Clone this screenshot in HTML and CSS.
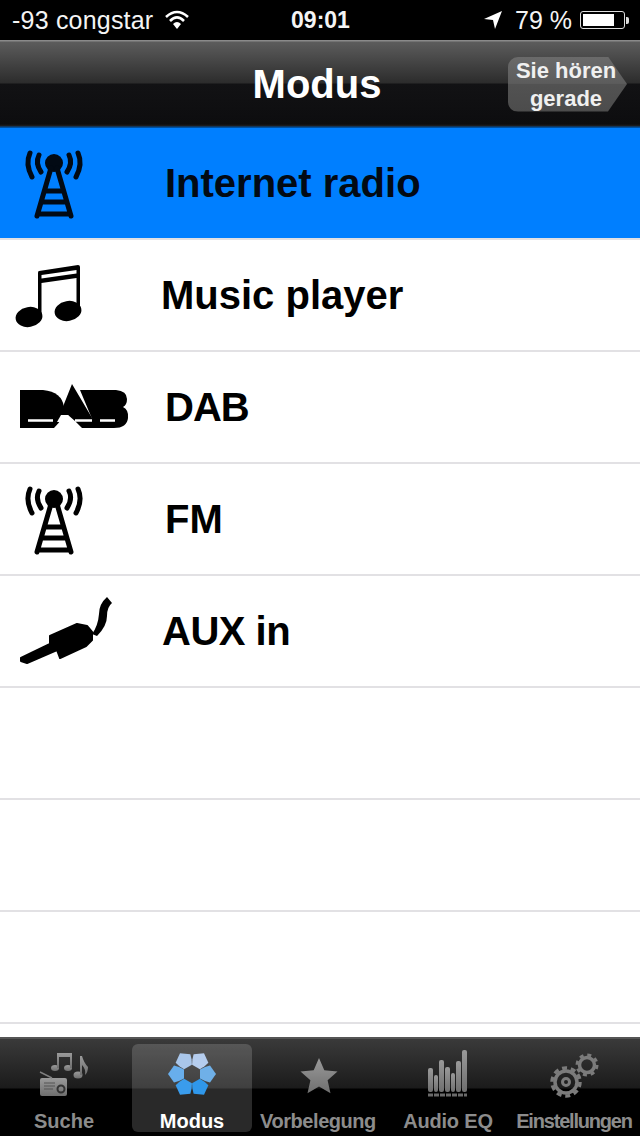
FILE: index.html
```html
<!DOCTYPE html>
<html lang="en">
<head>
    <meta charset="UTF-8">
    <meta name="viewport" content="width=device-width, initial-scale=1.0">
    <title>Modus</title>
    <link rel="stylesheet" href="styles.css">
</head>
<body>

<svg class="defs">
    <defs>
        <g id="tower">
            <circle cx="54" cy="35" r="9"/>
            <path d="M51 40 L37 88 M57 40 L71 88 M46 63 H62 M43 74 H65 M39 86 H69" fill="none" stroke="currentColor" stroke-width="5" stroke-linecap="round"/>
            <path d="M39 27 Q35 35 41 44 M69 27 Q73 35 67 44 M30 25 Q25 36 32 49 M78 25 Q83 36 76 49" fill="none" stroke="currentColor" stroke-width="5" stroke-linecap="round"/>
        </g>
        <linearGradient id="greyIcon" x1="0" y1="0" x2="0" y2="1">
            <stop offset="0" stop-color="#9a9a9a"/>
            <stop offset="1" stop-color="#6f6f6f"/>
        </linearGradient>
    </defs>
</svg>

<div class="status-bar">
    <div class="status-left">
        <span class="carrier">-93 congstar</span>
        <svg class="wifi" viewBox="0 0 24 20" width="24" height="20">
            <path d="M1 7 Q12 -3 23 7 M5 11 Q12 4 19 11" fill="none" stroke="#fff" stroke-width="2.6"/>
            <path d="M8 14 Q12 10 16 14 L12 19 Z" fill="#fff"/>
        </svg>
    </div>
    <div class="status-time">09:01</div>
    <div class="status-right">
        <svg class="arrow" viewBox="0 0 18 18" width="18" height="18">
            <path d="M0 8 L18 0 L11 18 L9 9 Z" fill="#fff"/>
        </svg>
        <span class="percent">79 %</span>
        <div class="battery"><div class="battery-fill"></div></div>
        <div class="battery-tip"></div>
    </div>
</div>

<div class="nav-bar">
    <div class="nav-title">Modus</div>
    <button class="now-playing">Sie hören<br>gerade</button>
</div>

<div class="list">
    <div class="row row-active">
        <svg class="row-icon" viewBox="0 0 165 110"><use href="#tower"/></svg>
        <span class="row-label">Internet radio</span>
    </div>
    <div class="row">
        <svg class="row-icon" viewBox="0 0 165 110">
            <ellipse cx="29" cy="77" rx="13.5" ry="10" transform="rotate(-10 29 77)"/>
            <ellipse cx="68" cy="71" rx="13.5" ry="10" transform="rotate(-10 68 71)"/>
            <path d="M39 31 L78 25 Q80 25 80 27 L80 71 L76.5 71 L76.5 38 L41.5 43 L41.5 77 L38 77 L38 33 Q38 31 39 31 Z"/>
            <path d="M41.5 35 L76.5 30 L76.5 33.5 L41.5 38.5 Z" fill="#fff"/>
        </svg>
        <span class="row-label label-music">Music player</span>
    </div>
    <div class="row">
        <svg class="row-icon" viewBox="0 0 165 110">
            <path d="M20 38 H43 Q62 40 64 55 Q64 67 54 76 H20 Z"/>
            <path d="M72 32 L98 76 H82 L75 69 L68 63 L60 63 L57 69 L52 76 Q62 66 60 62 Z"/>
            <path d="M80 38 H116 Q127 39 127 47 Q127 53 123 55 Q129 58 128 66 Q127 76 114 76 H96 L90 62 Z"/>
            <path d="M28 68.5 H53 M75 68.5 H92 M100 68.5 H115" stroke="#fff" stroke-width="2.4"/>
            <path d="M57 70 H72 L68 63 H61 Z" fill="#fff"/>
        </svg>
        <span class="row-label label-dab">DAB</span>
    </div>
    <div class="row">
        <svg class="row-icon" viewBox="0 0 165 110"><use href="#tower"/></svg>
        <span class="row-label">FM</span>
    </div>
    <div class="row">
        <svg class="row-icon" viewBox="0 0 165 110">
            <path d="M21 82 L50 68 L50 60 L77 48 L87 50 L92 56 L92 64 L86 70 L60 82 L57 74 L27 87 L21 85 Z" stroke="currentColor" stroke-width="2" stroke-linejoin="round"/>
            <path d="M92 58 Q98 50 99 38 Q99 28 107 21 L112 27 Q107 31 107 40 Q107 50 97 60 Z"/>
        </svg>
        <span class="row-label label-aux">AUX in</span>
    </div>
    <div class="row"></div>
    <div class="row"></div>
    <div class="row"></div>
    <div class="row"></div>
</div>

<div class="tab-bar">
    <div class="tab">
        <svg class="tab-icon" viewBox="0 0 80 56">
            <g fill="url(#greyIcon)">
                <path d="M18 34 L41 34 Q43 34 43 36 L43 50 Q43 52 41 52 L18 52 Q16 52 16 50 L16 36 Q16 34 18 34 Z"/>
                <ellipse cx="31" cy="24" rx="4" ry="3"/>
                <ellipse cx="44" cy="24" rx="4" ry="3"/>
                <path d="M33 9 L48 9 V24 H46 V13 L35 13 V24 H33 Z"/>
                <ellipse cx="54" cy="31" rx="4.5" ry="3.5"/>
                <path d="M56 12 L58 12 Q60 19 64 23 Q64 28 61 31 Q62 25 58 21 V31 H56 Z"/>
            </g>
            <path d="M16 28 L28 34" stroke="#7f7f7f" stroke-width="1.5"/>
            <path d="M20 39 H31 M20 42 H31 M20 45 H29" stroke="#555" stroke-width="1.2"/>
            <circle cx="37" cy="45" r="3.5" fill="none" stroke="#333" stroke-width="2"/>
        </svg>
        <span class="tab-label">Suche</span>
    </div>
    <div class="tab tab-active">
        <svg class="tab-icon" viewBox="0 0 80 56">
            <g transform="translate(40 30)">
                <polygon points="8,-4.5 8,4.5 13,7 18,8.5 24,0 18,-8.5 13,-7" fill="#6fb0e8"/>
                <polygon points="8,-4.5 8,4.5 13,7 18,8.5 24,0 18,-8.5 13,-7" fill="#2f97ea" transform="rotate(60)"/>
                <polygon points="8,-4.5 8,4.5 13,7 18,8.5 24,0 18,-8.5 13,-7" fill="#3a9cec" transform="rotate(120)"/>
                <polygon points="8,-4.5 8,4.5 13,7 18,8.5 24,0 18,-8.5 13,-7" fill="#68aeec" transform="rotate(180)"/>
                <polygon points="8,-4.5 8,4.5 13,7 18,8.5 24,0 18,-8.5 13,-7" fill="#a9c6ea" transform="rotate(240)"/>
                <polygon points="8,-4.5 8,4.5 13,7 18,8.5 24,0 18,-8.5 13,-7" fill="#b5cdee" transform="rotate(300)"/>
            </g>
        </svg>
        <span class="tab-label">Modus</span>
    </div>
    <div class="tab">
        <svg class="tab-icon" viewBox="0 0 80 56">
            <polygon points="41,14 46.3,26.2 59.5,27.5 49.6,36.3 52.5,49.3 41,42.5 29.5,49.3 32.4,36.3 22.5,27.5 35.7,26.2" fill="url(#greyIcon)"/>
        </svg>
        <span class="tab-label label-tight">Vorbelegung</span>
    </div>
    <div class="tab">
        <svg class="tab-icon" viewBox="0 0 80 56">
            <g fill="url(#greyIcon)">
                <rect x="20" y="24" width="5" height="24" rx="2"/>
                <rect x="26" y="31" width="4" height="17" rx="2"/>
                <rect x="31" y="16" width="5" height="32" rx="2"/>
                <rect x="37" y="23" width="5" height="25" rx="2"/>
                <rect x="43" y="29" width="4" height="19" rx="2"/>
                <rect x="48" y="17" width="5" height="31" rx="2"/>
                <rect x="54" y="6" width="5" height="42" rx="2"/>
            </g>
            <path d="M20 51 H59" stroke="#6a6a6a" stroke-width="3" stroke-dasharray="5 1"/>
        </svg>
        <span class="tab-label label-snug">Audio EQ</span>
    </div>
    <div class="tab">
        <svg class="tab-icon" viewBox="0 0 80 56" fill="none" stroke="#7b7b7b">
            <circle cx="32" cy="38" r="11" stroke-width="3.5"/>
            <circle cx="32" cy="38" r="14" stroke-width="3.5" stroke-dasharray="5 3.8"/>
            <circle cx="32" cy="38" r="3.5" stroke-width="3"/>
            <circle cx="53" cy="21" r="7.5" stroke-width="3.5"/>
            <circle cx="53" cy="21" r="10" stroke-width="3" stroke-dasharray="4 3.85"/>
        </svg>
        <span class="tab-label label-squeezed">Einstellungen</span>
    </div>
</div>

</body>
</html>
```

FILE: styles.css
```css
body {
    font-family: "Liberation Sans", Arial, sans-serif;
    display: flex;
    flex-direction: column;
    width: 640px;
    height: 1136px;
    margin: 0;
    overflow: hidden;
    background-color: white;
}

.defs {
    width: 0;
    height: 0;
    flex-shrink: 0;
}

/* status bar */
.status-bar {
    display: grid;
    grid-template-columns: 1fr auto 1fr;
    align-items: center;
    height: 40px;
    padding: 0 11px 0 12px;
    box-sizing: border-box;
    flex-shrink: 0;
    background-color: black;
    color: #f4f4f4;
    font-size: 25px;
}

.status-left {
    display: flex;
    align-items: center;
    gap: 12px;
}

.carrier {
    letter-spacing: 0.2px;
}

.status-time {
    font-weight: bold;
    font-size: 23px;
}

.status-right {
    display: flex;
    align-items: center;
    justify-content: flex-end;
}

.percent {
    margin-left: 13px;
}

.battery {
    width: 45px;
    height: 18px;
    margin-left: 8px;
    padding: 2px;
    box-sizing: border-box;
    border: 1px solid #ddd;
    border-radius: 3px;
}

.battery-fill {
    width: 31px;
    height: 100%;
    background-color: white;
}

.battery-tip {
    width: 3px;
    height: 7px;
    margin-left: 1px;
    background-color: #ddd;
    border-radius: 0 2px 2px 0;
}

/* navigation bar */
.nav-bar {
    display: grid;
    grid-template-columns: 1fr auto 1fr;
    align-items: center;
    height: 88px;
    padding: 0 13px 0 7px;
    box-sizing: border-box;
    flex-shrink: 0;
    background: linear-gradient(#8a8a8a 0, #8a8a8a 1px, #5c5c5c 2px, #2c2c2c 43px, #121214 44px, #0d0d0f 84px, #202022 86px, #0050a0 87px);
}

.nav-title {
    grid-column: 2;
    color: white;
    font-size: 40px;
    font-weight: bold;
}

.now-playing {
    grid-column: 3;
    justify-self: end;
    width: 119px;
    height: 55px;
    padding: 0 3px 0 0;
    border: none;
    border-radius: 10px 0 0 10px;
    clip-path: polygon(0 0, 84% 0, 100% 50%, 84% 100%, 0 100%);
    background: linear-gradient(#6a6a6a 0, #5c5c5c 48%, #525252 50%, #4c4c4c 100%);
    color: #f0f0f0;
    font-family: inherit;
    font-size: 22px;
    font-weight: bold;
    line-height: 28px;
}

/* mode list */
.list {
    flex: 1;
    min-height: 0;
    overflow: hidden;
}

.row {
    display: flex;
    align-items: center;
    height: 112px;
    box-sizing: border-box;
    border-bottom: 2px solid #e2e1e4;
    background-color: white;
    color: black;
}

.row-active {
    background-color: #007fff;
    color: #020a14;
}

.row-icon {
    width: 165px;
    height: 110px;
    flex-shrink: 0;
    fill: currentColor;
}

.row-label {
    font-size: 40px;
    font-weight: bold;
}

.label-music {
    margin-left: -4px;
}

.label-dab {
    letter-spacing: -1px;
}

.label-aux {
    margin-left: -3px;
    letter-spacing: -0.5px;
}

/* tab bar */
.tab-bar {
    display: grid;
    grid-template-columns: 128px 128px 124px 136px 116px;
    height: 99px;
    padding-top: 5px;
    box-sizing: border-box;
    flex-shrink: 0;
    border-top: 2px solid #555;
    background: linear-gradient(#3a3a3a 0, #1b1b1b 49px, black 50px);
}

.tab {
    display: flex;
    flex-direction: column;
    align-items: center;
    height: 88px;
    white-space: nowrap;
}

.tab-active {
    margin: 0 4px;
    background-color: rgba(255, 255, 255, 0.16);
    border-radius: 6px;
}

.tab-icon {
    width: 80px;
    height: 56px;
    flex-shrink: 0;
}

.tab-label {
    margin-top: 9px;
    color: #8c8c8c;
    font-size: 20px;
    font-weight: bold;
    line-height: 24px;
}

.tab-active .tab-label {
    color: white;
}

.label-snug {
    letter-spacing: -0.2px;
}

.label-tight {
    letter-spacing: -0.45px;
}

.label-squeezed {
    letter-spacing: -1.2px;
}
```
